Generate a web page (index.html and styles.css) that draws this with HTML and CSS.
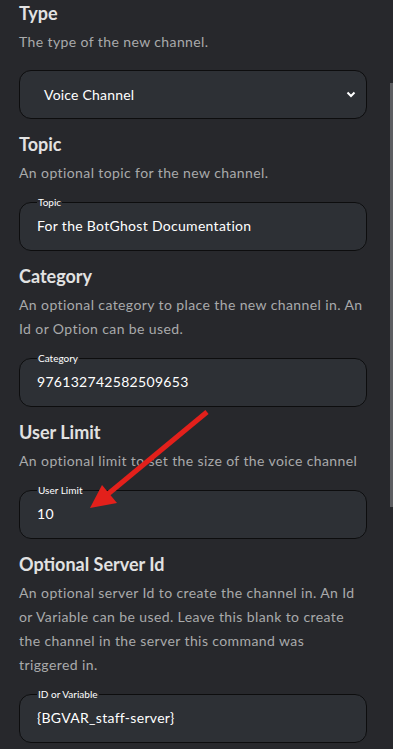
FILE: index.html
```html
<!doctype html>
<html>
<head>
  <link rel="stylesheet" href="styles.css">
</head>
<body>
  <div class="panel">
    <div class="option">
      <h3>Type</h3>
      <p class="desc">The type of the new channel.</p>
      <div class="select-box">
        <span>Voice Channel</span>
        <svg class="chevron" width="10" height="7" viewBox="0 0 10 7"><path d="M1.5 1.5 L5 5 L8.5 1.5" fill="none" stroke="#fff" stroke-width="2"/></svg>
      </div>
    </div>

    <div class="option">
      <h3>Topic</h3>
      <p class="desc">An optional topic for the new channel.</p>
      <fieldset class="field">
        <legend>Topic</legend>
        <div class="value">For the BotGhost Documentation</div>
      </fieldset>
    </div>

    <div class="option">
      <h3>Category</h3>
      <p class="desc">An optional category to place the new channel in. An Id or Option can be used.</p>
      <fieldset class="field">
        <legend>Category</legend>
        <div class="value">976132742582509653</div>
      </fieldset>
    </div>

    <div class="option">
      <h3>User Limit</h3>
      <p class="desc">An optional limit to set the size of the voice channel</p>
      <fieldset class="field">
        <legend>User Limit</legend>
        <div class="value">10</div>
      </fieldset>
    </div>

    <div class="option">
      <h3>Optional Server Id</h3>
      <p class="desc">An optional server Id to create the channel in. An Id or Variable can be used. Leave this blank to create the channel in the server this command was triggered in.</p>
      <fieldset class="field">
        <legend>ID or Variable</legend>
        <div class="value">{BGVAR_staff-server}</div>
      </fieldset>
    </div>
  </div>

  <div class="scrollbar"></div>

  <svg class="arrow" width="393" height="749" viewBox="0 0 393 749">
    <line x1="207" y1="412" x2="108" y2="494" stroke="#e3201b" stroke-width="5"/>
    <polygon points="90,508 102,485 117,503" fill="#e3201b"/>
  </svg>
</body>
</html>
```

FILE: styles.css
```css
* {
  margin: 0;
  padding: 0;
  box-sizing: border-box;
}

body {
  background: #27282c;
  font-family: Lato, "Noto Sans", sans-serif;
  width: 393px;
  height: 749px;
  overflow: hidden;
  position: relative;
}

.panel {
  padding: 1px 26px 0 19px;
}

.option {
  margin-bottom: 13px;
}

.option h3 {
  font-size: 18px;
  line-height: 24px;
  font-weight: 700;
  color: #e2e2e2;
}

.desc {
  margin-top: 5px;
  padding-right: 4px;
  font-size: 14px;
  line-height: 24px;
  letter-spacing: 0.4px;
  color: #a9aaab;
}

.select-box {
  margin-top: 16px;
  height: 49px;
  border: 1px solid #0d0d0e;
  border-radius: 12px;
  background: #2d3035;
  display: flex;
  align-items: center;
  justify-content: space-between;
  padding: 0 10px 0 24px;
  color: #fff;
  font-size: 14px;
  letter-spacing: 0.2px;
}

.field {
  margin-top: 12px;
  height: 54px;
  border: 1px solid #0d0d0e;
  border-radius: 12px;
  background: #2d3035;
  padding: 0 17px;
}

.field legend {
  font-size: 10px;
  line-height: 10px;
  color: #fff;
  padding: 0 1px;
}

.field .value {
  color: #fff;
  font-size: 14px;
  line-height: 20px;
  letter-spacing: 0.3px;
  padding-top: 9px;
}

.scrollbar {
  position: absolute;
  right: 0;
  top: 83px;
  width: 3px;
  height: 424px;
  background: #5c5d61;
}

.arrow {
  position: absolute;
  left: 0;
  top: 0;
  pointer-events: none;
}
```
